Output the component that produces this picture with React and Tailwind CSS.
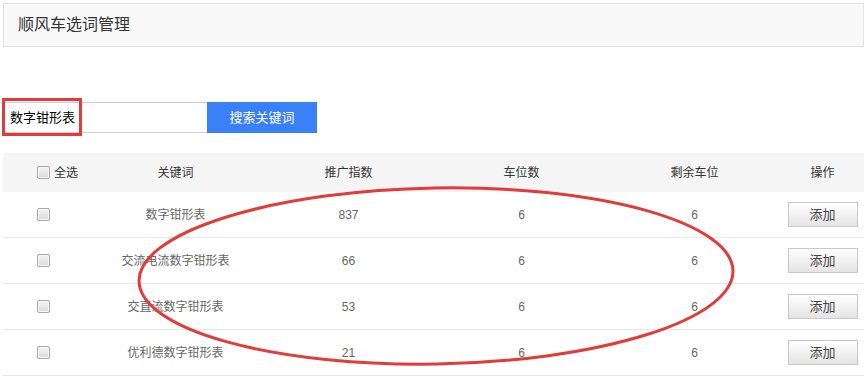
import React from "react";

const font = { fontFamily: 'Arial, "Liberation Sans", "Noto Sans CJK SC", sans-serif' };

function Check() {
  return (
    <span className="inline-block w-[13px] h-[13px] rounded-[2px] border border-[#a7a7a7] bg-gradient-to-b from-[#f4f4f4] to-[#d9d9d9] shadow-[inset_0_0_0_1px_#f8f8f8]" />
  );
}

const rows = [
  { k: "数字钳形表", n: "837" },
  { k: "交流电流数字钳形表", n: "66" },
  { k: "交直流数字钳形表", n: "53" },
  { k: "优利德数字钳形表", n: "21" },
];

export default function App() {
  return (
    <div className="relative w-[868px] h-[380px] overflow-hidden bg-white pl-[3px] pr-[4px] pt-[3px]" style={font}>
      <div className="h-[44px] border border-[#e3e3e3] bg-[#f9f9f9] flex items-center pl-[14px] text-[16px] text-[#333]">
        顺风车选词管理
      </div>

      <div className="mt-[55px] flex h-[31px]">
        <div className="w-[204px] border border-[#cfcfcf] border-r-0 flex items-center pl-[6px] text-[13px] text-black">
          数字钳形表
        </div>
        <div className="w-[110px] bg-[#3a80f6] text-white text-[13px] flex items-center justify-center">
          搜索关键词
        </div>
      </div>

      <div className="mt-[20px]">
        <div className="grid grid-cols-[86px_173px_173px_173px_173px_1fr] h-[39px] bg-[#f5f5f5] text-[12px] text-[#333] items-center">
          <div className="flex items-center pl-[34px] gap-[4px]">
            <Check />
            <span>全选</span>
          </div>
          <div className="text-center">关键词</div>
          <div className="text-center">推广指数</div>
          <div className="text-center">车位数</div>
          <div className="text-center">剩余车位</div>
          <div className="text-center">操作</div>
        </div>
        {rows.map((r, i) => (
          <div
            key={i}
            className="grid grid-cols-[86px_173px_173px_173px_173px_1fr] h-[46px] border-b border-[#e8e8e8] text-[12px] text-[#666] items-center"
          >
            <div className="flex items-center pl-[34px]">
              <Check />
            </div>
            <div className="text-center">{r.k}</div>
            <div className="text-center">{r.n}</div>
            <div className="text-center">6</div>
            <div className="text-center">6</div>
            <div className="flex justify-center">
              <button className="w-[70px] h-[25px] border border-[#c9c9c9] bg-gradient-to-b from-[#ffffff] to-[#e4e4e4] text-[13px] text-[#444] flex items-center justify-center">
                添加
              </button>
            </div>
          </div>
        ))}
      </div>

      <div className="absolute left-[2px] top-[98px] w-[80px] h-[38px] border-[3px] border-[#e23b3b] pointer-events-none" />

      <svg className="absolute left-0 top-0 pointer-events-none" width="868" height="380">
        <ellipse cx="436" cy="276" rx="297" ry="88" fill="none" stroke="#e23b3b" strokeWidth="3" transform="rotate(-1 436 276)" />
      </svg>
    </div>
  );
}
